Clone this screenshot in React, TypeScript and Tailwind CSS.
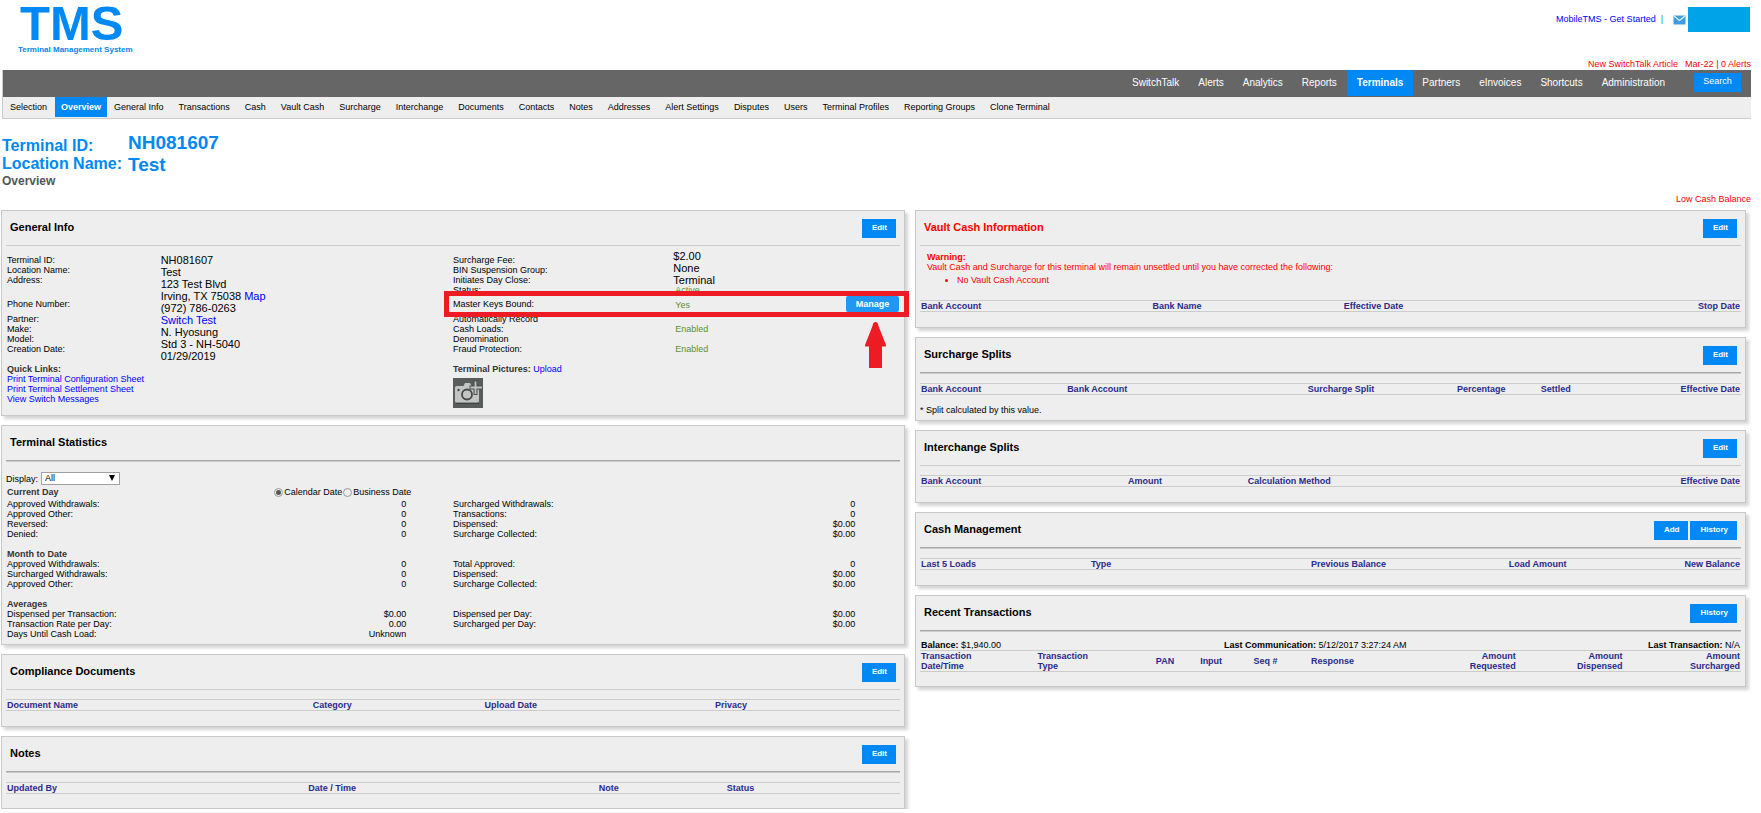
import React from "react";

type Column = { label: React.ReactNode; width: string; right?: boolean };

const mainNav = ["SwitchTalk", "Alerts", "Analytics", "Reports", "Terminals", "Partners", "eInvoices", "Shortcuts", "Administration"];

const subNav = [
  "Selection", "Overview", "General Info", "Transactions", "Cash", "Vault Cash", "Surcharge", "Interchange",
  "Documents", "Contacts", "Notes", "Addresses", "Alert Settings", "Disputes", "Users", "Terminal Profiles",
  "Reporting Groups", "Clone Terminal",
];

function CardButton({ children }: { children: string }) {
  return (
    <button type="button" className="h-[19px] bg-[#0088f4] pr-[9px] pb-[2px] pl-[10px] text-[8px] leading-none font-bold text-white">
      {children}
    </button>
  );
}

function Card({
  title, actions = [], alert = false, heavy = false, className = "", children,
}: {
  title: string; actions?: string[]; alert?: boolean; heavy?: boolean; className?: string; children: React.ReactNode;
}) {
  return (
    <section className={`relative border border-[#c8c8c8] bg-[#eee] px-1 shadow-[3px_3px_3px_#d4d4d4] ${className}`}>
      <header className={`flex h-[35px] items-start justify-between border-b px-1 pt-2 ${heavy ? "border-[#a6a6a6] shadow-[0_1px_0_#ccc]" : "border-[#ccc]"}`}>
        <h2 className={`text-[11px] leading-[17px] font-bold ${alert ? "text-[#f00]" : "text-black"}`}>{title}</h2>
        <div className="flex gap-[2px]">
          {actions.map((a) => <CardButton key={a}>{a}</CardButton>)}
        </div>
      </header>
      {children}
    </section>
  );
}

function HeadTable({ columns, className = "" }: { columns: Column[]; className?: string }) {
  return (
    <table className={`w-full table-fixed border-collapse ${className}`}>
      <thead>
        <tr className="border-y border-[#ccc]">
          {columns.map((c, i) => (
            <th key={i} scope="col" className={`${c.width} ${c.right ? "text-right" : "text-left"} p-0 px-px leading-[10px] font-bold whitespace-nowrap text-[#2a2a8c]`}>
              {c.label}
            </th>
          ))}
        </tr>
      </thead>
    </table>
  );
}

function MailIcon() {
  return (
    <svg viewBox="0 0 13 10" className="h-[10px] w-[13px]" aria-hidden="true">
      <rect x="0.5" y="0.5" width="12" height="9" rx="1" fill="#3d9be0" stroke="#9fd0f2" />
      <path d="M1 1l5.500 4.500L12 1" fill="none" stroke="#e4f3fd" strokeWidth="1.200" />
    </svg>
  );
}

function CameraIcon() {
  return (
    <svg viewBox="0 0 30 30" className="h-[30px] w-[30px]" aria-hidden="true">
      <rect width="30" height="30" fill="#585c5b" />
      <path d="M2 9.500q0-1.500 1.500-1.500H10.500l1.500-3h5l1.500 3H26V23q0 1.500-1.500 1.500h-21Q2 24.500 2 23z" fill="#c3c5c4" />
      <path d="M3 25.500h23" stroke="#3e4140" strokeWidth="1" />
      <path d="M22.500 2.500v14.500M16.500 9.500h13" stroke="#4c504f" strokeWidth="4" />
      <circle cx="14" cy="16.500" r="5" fill="#c3c5c4" stroke="#454948" strokeWidth="1.800" />
      <circle cx="5.500" cy="12" r="1.200" fill="#454948" />
      <path d="M22.500 3.500v12.500M17.500 9.500h11.500" stroke="#c3c5c4" strokeWidth="1.800" />
    </svg>
  );
}

const link = "text-[#00f]";

function GeneralInfo() {
  return (
    <Card title="General Info" actions={["Edit"]} className="h-[206px]">
      <div className="grid grid-cols-[17%_33%_24.7%_25.3%] px-px pt-[9px] leading-[10px]">
        <div>
          <p>Terminal ID:</p>
          <p>Location Name:</p>
          <p>Address:</p>
          <p className="pt-[14px]">Phone Number:</p>
          <p className="pt-[5px]">Partner:</p>
          <p>Make:</p>
          <p>Model:</p>
          <p>Creation Date:</p>
          <p className="pt-[10px] font-bold text-[#333]">Quick Links:</p>
          <p className="whitespace-nowrap"><a href="#config" className={link}>Print Terminal Configuration Sheet</a></p>
          <p className="whitespace-nowrap"><a href="#settlement" className={link}>Print Terminal Settlement Sheet</a></p>
          <p className="whitespace-nowrap"><a href="#messages" className={link}>View Switch Messages</a></p>
        </div>
        <div className="-mt-px pl-[2px] text-[11px] leading-[12px]">
          <p>NH081607</p>
          <p>Test</p>
          <p>123 Test Blvd</p>
          <p>Irving, TX 75038 <a href="#map" className={link}>Map</a></p>
          <p>(972) 786-0263</p>
          <p><a href="#partner" className={link}>Switch Test</a></p>
          <p>N. Hyosung</p>
          <p>Std 3 - NH-5040</p>
          <p>01/29/2019</p>
        </div>
        <div>
          <p>Surcharge Fee:</p>
          <p>BIN Suspension Group:</p>
          <p>Initiates Day Close:</p>
          <p>Status:</p>
          <p className="pt-1">Master Keys Bound:</p>
          <p className="pt-[5px]">Automatically Record</p>
          <p>Cash Loads:</p>
          <p>Denomination</p>
          <p>Fraud Protection:</p>
          <p className="pt-[10px] font-bold text-[#333]">
            Terminal Pictures: <a href="#upload" className="font-normal text-[#00f]">Upload</a>
          </p>
          <button type="button" aria-label="Add picture" className="mt-1 block"><CameraIcon /></button>
        </div>
        <div className="-mt-[5px] text-[#5f8f2f]">
          <div className="text-[11px] leading-[12px] text-black">
            <p>$2.00</p>
            <p>None</p>
            <p>Terminal</p>
          </div>
          <div className="pl-[2px]">
            <p className="-mt-px">Active</p>
            <p className="pt-[5px]">Yes</p>
            <p className="pt-[14px]">Enabled</p>
            <p className="pt-[10px]">Enabled</p>
          </div>
        </div>
      </div>
      <div className="pointer-events-none absolute top-20 -right-[5px] flex h-[26px] w-[465px] justify-end border-[5px] border-[#ed1c24] pr-[5px]">
        <button type="button" className="pointer-events-auto h-4 w-[53px] rounded-[2px] bg-[#2196f3] text-[9px] leading-none font-bold text-white">
          Manage
        </button>
      </div>
      <svg viewBox="0 0 21 46" className="absolute top-[111px] right-[18px] h-[46px] w-[21px]" aria-hidden="true">
        <path d="M10.500 0Q13 0 13.500 4L21 23v1.500h-4V46H4V24.500H0V23L7.500 4Q8 0 10.500 0z" fill="#ed1c24" />
      </svg>
    </Card>
  );
}

type StatRow = [string, string, string, string];

const statGroups: { title: string; rows: StatRow[] }[] = [
  {
    title: "Current Day",
    rows: [
      ["Approved Withdrawals:", "0", "Surcharged Withdrawals:", "0"],
      ["Approved Other:", "0", "Transactions:", "0"],
      ["Reversed:", "0", "Dispensed:", "$0.00"],
      ["Denied:", "0", "Surcharge Collected:", "$0.00"],
    ],
  },
  {
    title: "Month to Date",
    rows: [
      ["Approved Withdrawals:", "0", "Total Approved:", "0"],
      ["Surcharged Withdrawals:", "0", "Dispensed:", "$0.00"],
      ["Approved Other:", "0", "Surcharge Collected:", "$0.00"],
    ],
  },
  {
    title: "Averages",
    rows: [
      ["Dispensed per Transaction:", "$0.00", "Dispensed per Day:", "$0.00"],
      ["Transaction Rate per Day:", "0.00", "Surcharged per Day:", "$0.00"],
      ["Days Until Cash Load:", "Unknown", "", ""],
    ],
  },
];

function StatTable({ rows }: { rows: StatRow[] }) {
  return (
    <table className="w-full table-fixed border-collapse leading-[10px]">
      <tbody>
        {rows.map((r) => (
          <tr key={r[0]}>
            <th scope="row" className="w-[30%] p-0 pl-px text-left font-normal">{r[0]}</th>
            <td className="w-[15%] p-0 pr-[2px] text-right">{r[1]}</td>
            <td className="w-[5%] p-0" />
            <th scope="row" className="w-[25%] p-0 text-left font-normal">{r[2]}</th>
            <td className="w-[20%] p-0 text-right">{r[3]}</td>
            <td className="w-[5%] p-0" />
          </tr>
        ))}
      </tbody>
    </table>
  );
}

const radio =
  "h-[9px] w-[9px] appearance-none rounded-full border border-[#999] bg-[#eee] bg-clip-content p-px checked:bg-[#555]";

function TerminalStatistics() {
  return (
    <Card title="Terminal Statistics" heavy className="h-[220px]">
      <div className="flex items-center gap-[3px] pt-[11px]">
        <label htmlFor="display">Display:</label>
        <div className="relative flex">
          <select id="display" className="h-[13px] w-[79px] appearance-none border border-[#a0a0a0] bg-white pl-[3px] text-[9px] leading-none">
            <option>All</option>
          </select>
          <svg viewBox="0 0 6 6" className="pointer-events-none absolute top-[3px] right-[5px] h-[6px] w-[6px]" aria-hidden="true">
            <path d="M0 0h6L3 6z" />
          </svg>
        </div>
      </div>
      <div className="grid grid-cols-[30%_70%] pt-[2px] pb-[2px] leading-[10px]">
        <h3 className="pl-px font-bold text-[#333]">Current Day</h3>
        <div className="flex items-center gap-px">
          <input type="radio" id="calendar" name="basis" defaultChecked className={radio} />
          <label htmlFor="calendar">Calendar Date</label>
          <input type="radio" id="business" name="basis" className={radio} />
          <label htmlFor="business">Business Date</label>
        </div>
      </div>
      <StatTable rows={statGroups[0].rows} />
      {statGroups.slice(1).map((g) => (
        <React.Fragment key={g.title}>
          <h3 className="pt-[10px] pl-px leading-[10px] font-bold text-[#333]">{g.title}</h3>
          <StatTable rows={g.rows} />
        </React.Fragment>
      ))}
    </Card>
  );
}

export default function App() {
  return (
    <div className="bg-white font-['Liberation_Sans',Arial,sans-serif] text-[9px] leading-[10px] text-black">
      <header className="flex h-[70px] justify-between pr-[10px] pl-[18px]">
        <div className="text-[#0088f4]">
          <div className="pl-[2px] text-[49px] leading-[46px] font-bold">TMS</div>
          <div className="text-[8px] leading-[8px] font-bold">Terminal Management System</div>
        </div>
        <div className="flex flex-col items-end justify-between pt-[7px] pb-px">
          <div className="flex items-center pr-px">
            <a href="#mobile" className="pb-px text-[#00f]">MobileTMS - Get Started</a>
            <span className="pb-px pl-[5px] text-[#0088f4]">|</span>
            <a href="#mail" aria-label="Mail" className="pl-[10px]"><MailIcon /></a>
            <div className="ml-[2px] h-[25px] w-[62px] bg-[#00a2e8]" />
          </div>
          <p className="text-[#f00]">
            <a href="#article">New SwitchTalk Article</a>
            <a href="#march" className="pl-[7px]">Mar-22</a> <span className="text-[#633]">|</span> <a href="#alerts">0 Alerts</a>
          </p>
        </div>
      </header>

      <div className="mr-[10px] ml-[2px] border-b border-l border-[#ccc] bg-[#eee]">
        <nav aria-label="Main" className="flex h-[27px] items-start justify-end bg-[#666] pr-[10px] text-[10px] text-white">
          {mainNav.map((n) => (
            <a key={n} href={`#${n}`} className={n === "Terminals" ? "h-[26px] bg-[#0088f4] px-[10px] leading-[26px] font-bold" : "pr-[10px] pl-[9px] leading-[26px]"}>
              {n}
            </a>
          ))}
          <button type="button" className="mt-[3px] ml-[19px] h-[19px] w-[47px] bg-[#0088f4] pb-[2px] text-[9px] leading-none">Search</button>
        </nav>
        <nav aria-label="Terminal" className="flex h-[21px] items-start">
          {subNav.map((n) => (
            <a key={n} href={`#${n}`} className={n === "Overview" ? "h-5 bg-[#0088f4] px-[6px] leading-5 font-bold text-white" : "pr-2 pl-[7px] leading-5"}>
              {n}
            </a>
          ))}
        </nav>
      </div>

      <div className="h-[91px] pt-[14px] pr-[10px] pl-[2px]">
        <dl className="grid grid-cols-[126px_1fr] font-bold text-[#0088f4]">
          <dt className="pt-[3px] text-[16px] leading-[19px]">Terminal ID:</dt>
          <dd className="text-[19px] leading-[20px]">NH081607</dd>
          <dt className="text-[16px] leading-[17px]">Location Name:</dt>
          <dd className="text-[19px] leading-[20px]">Test</dd>
        </dl>
        <h1 className="-mt-px text-[12px] leading-[14px] font-bold text-[#555]">Overview</h1>
        <p className="pt-[6px] text-right text-[#f00]">Low Cash Balance</p>
      </div>

      <main className="grid grid-cols-[904fr_831fr] items-start gap-[10px] pr-[15px] pl-px">
        <div className="flex min-w-0 flex-col gap-[9px]">
          <GeneralInfo />
          <TerminalStatistics />
          <Card title="Compliance Documents" actions={["Edit"]} className="h-[73px]">
            <HeadTable
              className="mt-[9px]"
              columns={[
                { label: "Document Name", width: "w-[34.2%]" },
                { label: "Category", width: "w-[19.2%]" },
                { label: "Upload Date", width: "w-[25.8%]" },
                { label: "Privacy", width: "w-[20.8%]" },
              ]}
            />
          </Card>
          <Card title="Notes" actions={["Edit"]} heavy className="h-[73px]">
            <HeadTable
              className="mt-[10px]"
              columns={[
                { label: "Updated By", width: "w-[33.7%]" },
                { label: "Date / Time", width: "w-[32.5%]" },
                { label: "Note", width: "w-[14.3%]" },
                { label: "Status", width: "w-[19.5%]" },
              ]}
            />
          </Card>
        </div>

        <div className="flex min-w-0 flex-col gap-[9px]">
          <Card title="Vault Cash Information" actions={["Edit"]} alert className="h-[118px]">
            <div className="pt-[6px] pl-[7px] text-[#f00]">
              <p className="font-bold">Warning:</p>
              <p>Vault Cash and Surcharge for this terminal will remain unsettled until you have corrected the following:</p>
              <ul className="list-disc pt-[3px] pl-[30px]">
                <li>No Vault Cash Account</li>
              </ul>
            </div>
            <HeadTable
              className="mt-[15px]"
              columns={[
                { label: "Bank Account", width: "w-[28.2%]" },
                { label: "Bank Name", width: "w-[23.3%]" },
                { label: "Effective Date", width: "w-[24%]" },
                { label: "Stop Date", width: "w-[24.5%]", right: true },
              ]}
            />
          </Card>
          <Card title="Surcharge Splits" actions={["Edit"]} heavy className="h-[84px]">
            <HeadTable
              className="mt-[10px]"
              columns={[
                { label: "Bank Account", width: "w-[17.8%]" },
                { label: "Bank Account", width: "w-[29.3%]" },
                { label: "Surcharge Split", width: "w-[18.2%]" },
                { label: "Percentage", width: "w-[10.2%]" },
                { label: "Settled", width: "w-[8%]" },
                { label: "Effective Date", width: "w-[16.5%]", right: true },
              ]}
            />
            <p className="pt-[10px]">* Split calculated by this value.</p>
          </Card>
          <Card title="Interchange Splits" actions={["Edit"]} className="h-[73px]">
            <HeadTable
              className="mt-[9px]"
              columns={[
                { label: "Bank Account", width: "w-[25.2%]" },
                { label: "Amount", width: "w-[14.6%]" },
                { label: "Calculation Method", width: "w-[35.2%]" },
                { label: "Effective Date", width: "w-[25%]", right: true },
              ]}
            />
          </Card>
          <Card title="Cash Management" actions={["Add", "History"]} heavy className="h-[74px]">
            <HeadTable
              className="mt-[10px]"
              columns={[
                { label: "Last 5 Loads", width: "w-[20.7%]" },
                { label: "Type", width: "w-[26.8%]" },
                { label: "Previous Balance", width: "w-[24.1%]" },
                { label: "Load Amount", width: "w-[14.4%]" },
                { label: "New Balance", width: "w-[14%]", right: true },
              ]}
            />
          </Card>
          <Card title="Recent Transactions" actions={["History"]} heavy className="h-[92px]">
            <div className="grid grid-cols-[37%_1fr_auto] px-px pt-[9px]">
              <p><b>Balance:</b> $1,940.00</p>
              <p><b>Last Communication:</b> 5/12/2017 3:27:24 AM</p>
              <p><b>Last Transaction:</b> N/A</p>
            </div>
            <HeadTable
              columns={[
                { label: <>Transaction<br />Date/Time</>, width: "w-[14.2%]" },
                { label: <>Transaction<br />Type</>, width: "w-[14.4%]" },
                { label: "PAN", width: "w-[5.4%]" },
                { label: "Input", width: "w-[6.5%]" },
                { label: "Seq #", width: "w-[7%]" },
                { label: "Response", width: "w-[12.5%]" },
                { label: <>Amount<br />Requested</>, width: "w-[12.7%]", right: true },
                { label: <>Amount<br />Dispensed</>, width: "w-[13%]", right: true },
                { label: <>Amount<br />Surcharged</>, width: "w-[14.3%]", right: true },
              ]}
            />
          </Card>
        </div>
      </main>
    </div>
  );
}
